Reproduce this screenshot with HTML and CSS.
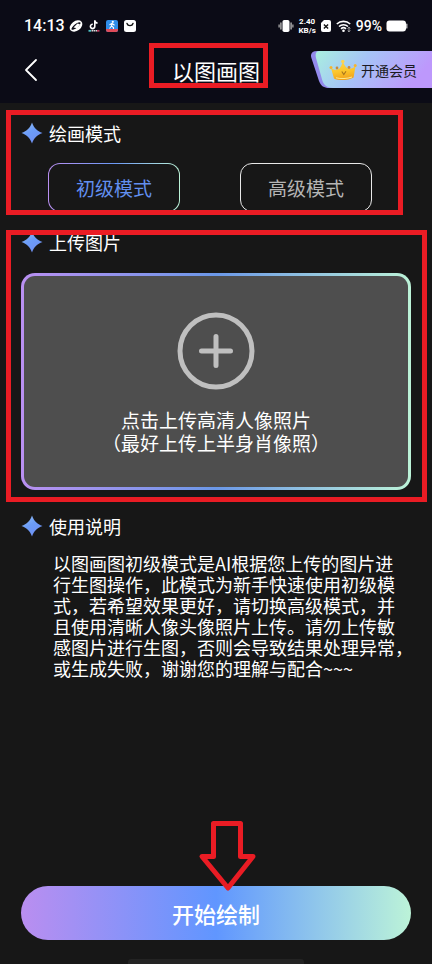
FILE: index.html
```html
<!DOCTYPE html>
<html lang="zh-CN">
<head>
<meta charset="utf-8">
<meta name="viewport" content="width=device-width, initial-scale=1">
<title>以图画图</title>
<link rel="stylesheet" href="styles.css">
</head>
<body>
<svg class="defs" width="0" height="0" aria-hidden="true">
  <defs>
    <linearGradient id="starFill" x1="0" y1="0" x2="0.6" y2="1">
      <stop offset="0" stop-color="#9cc4f0"/><stop offset="0.5" stop-color="#6c9df8"/><stop offset="1" stop-color="#6f90f5"/>
    </linearGradient>
    <symbol id="star" viewBox="0 0 22 22">
      <path fill="url(#starFill)" d="M11 .5C13 6 16 9 21.500 11C16 13 13 16 11 21.500C9 16 6 13 .5 11C6 9 9 6 11 .5Z"/>
    </symbol>
  </defs>
</svg>

<header class="top">
  <div class="status">
    <div class="status-group">
      <span class="clock">14:13</span>
      <svg width="14" height="14" viewBox="0 0 14 14"><ellipse cx="7" cy="7" rx="7" ry="4.900" fill="#fff" transform="rotate(-38 7 7)"/><ellipse cx="7" cy="7" rx="5.600" ry="1.900" fill="#0b0b16" transform="rotate(-38 7 7)"/><path d="M4.500 8.500L8.300 9.200L11 5.200L8.500 4.600Z" fill="#fff"/></svg>
      <svg width="14" height="14" viewBox="0 0 14 14"><path d="M7.800 1.300V7.300A2.200 2.200 0 1 1 5.800 5.200M7.800 1.300C8 3 9.200 4 10.600 4" fill="none" stroke="#fff" stroke-width="1.600"/><path d="M1.500 11.800H4" stroke="#4fc4c8" stroke-width="1.800"/><path d="M4.500 11.800H10" stroke="#ddd" stroke-width="1.600" stroke-dasharray="1.500 .5"/><path d="M10 11.800H12.500" stroke="#b8385a" stroke-width="1.800"/></svg>
      <svg width="14" height="14" viewBox="0 0 14 14"><rect x="1" y="1" width="12" height="12" rx="2" fill="#2f8de8"/><path d="M1 10H13V11A2 2 0 0 1 11 13H3A2 2 0 0 1 1 11Z" fill="#df4b59"/><circle cx="7.800" cy="2.800" r="1.100" fill="#fff"/><path d="M4.500 5.800L7 4.500L9.500 6.300M7 4.500L6.500 7L8.500 8.500V10M6.500 7L4.500 9.500" fill="none" stroke="#fff" stroke-width="1.100"/></svg>
      <svg width="14" height="14" viewBox="0 0 14 14"><rect x="1" y="1" width="12" height="12" rx="2.500" fill="#fff"/><path d="M4 4.500C4.800 7.300 9.200 7.300 10 4.500" fill="none" stroke="#111" stroke-width="1.400" stroke-linecap="round"/></svg>
    </div>
    <div class="status-group">
      <svg width="16" height="14" viewBox="0 0 16 14"><rect x="4.500" y="1" width="7" height="12" rx="1.800" fill="#fff"/><path d="M2.900 3.500V10.500M13.100 3.500V10.500" stroke="#aaa" stroke-width="1.500"/><path d="M1.100 5.500V8.500M14.900 5.500V8.500" stroke="#aaa" stroke-width="1.300"/></svg>
      <span class="speed"><span>2.40</span><span>KB/s</span></span>
      <svg width="12" height="14" viewBox="0 0 12 14"><path d="M4 1H9A2 2 0 0 1 11 3V11A2 2 0 0 1 9 13H3A2 2 0 0 1 1 11V4Z" fill="#fff"/><path d="M3.900 5.500L8.100 9.500M8.100 5.500L3.900 9.500" stroke="#111" stroke-width="1.400"/></svg>
      <svg width="16" height="14" viewBox="0 0 16 14"><g fill="none" stroke="#fff" stroke-width="1.600"><path d="M.8 5A9.800 9.800 0 0 1 14.200 5"/><path d="M3 7.500A6.500 6.500 0 0 1 12 7.500"/><path d="M5 9.800A3.600 3.600 0 0 1 10 9.800"/></g><circle cx="7.500" cy="11.800" r="1.300" fill="#fff"/><path d="M13 8.200V12.500M11.700 9.500L13 8.200L14.300 9.500M11.700 11.500L13 12.800L14.300 11.500" fill="none" stroke="#ccc" stroke-width=".8"/></svg>
      <span class="percent">99%</span>
      <svg width="22" height="14" viewBox="0 0 22 14"><rect x=".5" y="1.500" width="19.500" height="11" rx="3" fill="#fff"/><path d="M20.800 5V9" stroke="#ddd" stroke-width="1.200" stroke-linecap="round"/></svg>
    </div>
  </div>
  <nav class="nav">
    <button class="back" type="button" aria-label="返回"><svg width="14" height="24" viewBox="0 0 14 24"><path d="M12 2L2 12L12 22" fill="none" stroke="#fff" stroke-width="1.800" stroke-linecap="round" stroke-linejoin="round"/></svg></button>
    <h1 class="title">以图画图</h1>
    <a class="vip" href="#vip">
      <svg class="vip-shape" viewBox="0 0 121 37" width="121" height="37" aria-hidden="true">
        <defs><linearGradient id="vipFill" x1="0" y1="0" x2="1" y2=".25"><stop offset="0" stop-color="#a9f0df"/><stop offset=".45" stop-color="#a6c4f7"/><stop offset="1" stop-color="#bd98fc"/></linearGradient></defs>
        <path d="M6 0C1 0-1 3 .4 7L8 30C10 35 13 37 18 37H30V0Z" fill="#938aec"/>
        <path d="M8 0H121V37H22C16 37 13 34 11.500 30L5 7C4 3 5 0 8 0Z" fill="url(#vipFill)"/>
      </svg>
      <svg class="crown" width="28" height="22" viewBox="0 0 28 22" aria-hidden="true">
        <defs><linearGradient id="gold" x1="0" y1="0" x2=".2" y2="1"><stop offset="0" stop-color="#ffd94f"/><stop offset=".6" stop-color="#fbc52b"/><stop offset="1" stop-color="#f2a41d"/></linearGradient></defs>
        <path d="M5 19.500L2 9C4.500 11.200 8 11.300 10.500 9.500C12 8 12.900 5.400 13.800 2.600C15 5.300 16 7.900 18 9C20.500 10.500 24 9.500 26.500 7L24.600 18.500C20 21.500 9 22 5 19.500Z" fill="url(#gold)"/>
        <path d="M7 18.800C12 20 18 19.800 23 18" stroke="#ffe98b" stroke-width="1" fill="none"/>
        <circle cx="2" cy="8.500" r="1.500" fill="#f6b52d"/><circle cx="13.800" cy="2.400" r="1.700" fill="#ffd34d"/><circle cx="26.200" cy="6.600" r="1.500" fill="#f6b52d"/><circle cx="8" cy="9" r="1.400" fill="#c9893a"/><circle cx="20" cy="8.500" r="1.400" fill="#c9893a"/>
        <path d="M12.800 12.500L14.800 15.500L17 12.300" stroke="#a5741f" stroke-width="1.100" fill="none"/>
      </svg>
      <span class="vip-text">开通会员</span>
    </a>
    <span class="mark mark-title"></span>
  </nav>
</header>

<main class="content">
  <section class="modes">
    <h2 class="heading"><svg width="22" height="22"><use href="#star"/></svg>绘画模式</h2>
    <div class="mode-row">
      <button class="mode active" type="button">初级模式</button>
      <button class="mode" type="button">高级模式</button>
    </div>
    <span class="mark mark-modes"></span>
  </section>

  <section class="upload">
    <h2 class="heading"><svg width="22" height="22"><use href="#star"/></svg>上传图片</h2>
    <button class="drop" type="button">
      <svg width="78" height="78" viewBox="0 0 78 78" aria-hidden="true"><circle cx="39" cy="39" r="36" fill="none" stroke="#bfbfbf" stroke-width="5"/><path d="M39 24.500V53.500M24.500 39H53.500" stroke="#bfbfbf" stroke-width="5" stroke-linecap="round"/></svg>
      <span>点击上传高清人像照片<br>（最好上传上半身肖像照）</span>
    </button>
    <span class="mark mark-upload"></span>
  </section>

  <section class="guide">
    <h2 class="heading"><svg width="22" height="22"><use href="#star"/></svg>使用说明</h2>
    <p class="guide-text">以图画图初级模式是AI根据您上传的图片进<br>行生图操作，此模式为新手快速使用初级模<br>式，若希望效果更好，请切换高级模式，并<br>且使用清晰人像头像照片上传。请勿上传敏<br>感图片进行生图，否则会导致结果处理异常，<br>或生成失败，谢谢您的理解与配合~~~</p>
  </section>
</main>

<footer class="bottom">
  <button class="start" type="button">开始绘制</button>
  <svg class="arrow" width="62" height="74" viewBox="0 0 62 74" aria-hidden="true"><path d="M17.500 4.500H44.500V37.500H57L32 69L6 37.500H17.500Z" fill="none" stroke="#ea1c24" stroke-width="5" stroke-linejoin="round"/></svg>
  <div class="home-bar"></div>
</footer>
</body>
</html>
```
FILE: styles.css
```css
* {
  box-sizing: border-box;
}

body {
  margin: 0;
  min-height: 100vh;
  display: flex;
  flex-direction: column;
  background: #171717;
  color: #fff;
  font-family: "Noto Sans CJK SC", sans-serif;
  overflow-x: hidden;
}

button {
  margin: 0;
  padding: 0;
  border: 0;
  background: none;
  color: inherit;
  font: inherit;
  cursor: pointer;
}

h1, h2, p {
  margin: 0;
  font-weight: 400;
}

svg {
  display: block;
  flex: none;
}

.defs {
  position: absolute;
}

.mark {
  position: absolute;
  border: 5px solid #ea1c24;
  pointer-events: none;
}

/* Header */
.top {
  height: 103px;
  background: #0b0b16;
}

.status {
  display: flex;
  justify-content: space-between;
  align-items: center;
  height: 51px;
  padding: 0 24px;
}

.status-group {
  display: flex;
  align-items: center;
  gap: 4px;
  font-family: Roboto, sans-serif;
}

.clock {
  font-size: 16px;
  font-weight: 500;
  line-height: 20px;
}

.speed {
  display: flex;
  flex-direction: column;
  align-items: center;
  font-size: 8px;
  font-weight: 700;
  line-height: 9px;
}

.percent {
  font-size: 14px;
  font-weight: 500;
  line-height: 20px;
}

.nav {
  position: relative;
  display: flex;
  align-items: center;
  justify-content: space-between;
  height: 37px;
  padding-left: 24px;
}

.title {
  position: absolute;
  left: 0;
  right: 0;
  text-align: center;
  font-size: 22px;
  line-height: 32px;
  pointer-events: none;
}

.mark-title {
  left: calc(50% - 67px);
  top: -8px;
  width: 119px;
  height: 45px;
}

.vip {
  position: relative;
  display: flex;
  align-items: center;
  gap: 4px;
  height: 37px;
  padding: 0 15px 0 18px;
  color: #1a1a22;
  font-size: 14px;
  line-height: 20px;
  text-decoration: none;
}

.vip-shape {
  position: absolute;
  right: 0;
  top: 0;
}

.crown,
.vip-text {
  position: relative;
}

/* Sections */
.content {
  flex: 1;
}

.modes,
.upload,
.guide {
  position: relative;
}

.heading {
  display: flex;
  align-items: center;
  gap: 6px;
  height: 28px;
  padding-left: 21px;
  font-size: 18px;
  line-height: 28px;
}

.modes {
  padding-top: 16px;
}

.mode-row {
  display: grid;
  grid-template-columns: 1fr 1fr;
  gap: 60px;
  padding: 16px 60px 0 48px;
}

.mode {
  height: 49px;
  border: 1px solid #e8e8e8;
  border-radius: 12px;
  color: #b5b5b5;
  font-size: 19px;
  line-height: 28px;
}

.mode.active {
  border-color: transparent;
  background:
    linear-gradient(#171717, #171717) padding-box,
    linear-gradient(90deg, #ba90f2, #6b98f5 50%, #bcf3d8) border-box;
  color: #628ff0;
}

.mark-modes {
  left: 6px;
  right: 29px;
  top: 7px;
  height: 105px;
}

.upload {
  padding: 16px 21px 0;
}

.upload .heading {
  padding-left: 0;
}

.drop {
  display: flex;
  flex-direction: column;
  align-items: center;
  gap: 18px;
  width: 100%;
  height: 217px;
  margin-top: 17px;
  padding-top: 36px;
  border: 3px solid transparent;
  border-radius: 14px;
  background:
    linear-gradient(#4e4e4e, #4e4e4e) padding-box,
    linear-gradient(90deg, #ba90f2, #6b98e8 50%, #bcf3d8) border-box;
  font-size: 19px;
  line-height: 23px;
}

.mark-upload {
  left: 6px;
  right: 5px;
  top: 18px;
  height: 272px;
}

.guide {
  padding-top: 22px;
}

.guide-text {
  padding: 13px 0 0 53px;
  font-size: 18px;
  line-height: 21px;
  white-space: nowrap;
}

/* Footer */
.bottom {
  position: relative;
  padding: 0 21px;
}

.start {
  display: block;
  width: 100%;
  height: 54px;
  border-radius: 27px;
  background: linear-gradient(90deg, #ba8ef0, #6096ff 50%, #bcf3d8);
  font-size: 22px;
  font-weight: 500;
  line-height: 32px;
}

.arrow {
  position: absolute;
  left: calc(50% - 20px);
  top: -67px;
}

.home-bar {
  width: 176px;
  height: 5px;
  margin: 19px auto 0;
  border-radius: 3px 3px 0 0;
  background: #232323;
}
```
